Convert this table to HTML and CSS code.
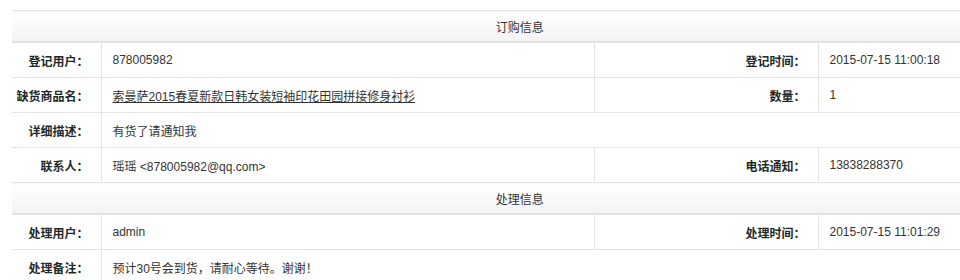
FILE: index.html
```html
<!DOCTYPE html>
<html lang="zh">
<head>
<meta charset="utf-8">
<title>订购信息</title>
<link rel="stylesheet" href="styles.css">
</head>
<body>
<table class="info">
  <colgroup>
    <col class="c1"><col class="c2"><col class="c3"><col class="c4">
  </colgroup>
  <tr class="head"><th colspan="4">订购信息</th></tr>
  <tr>
    <td class="lbl">登记用户：</td><td class="val">878005982</td>
    <td class="lbl">登记时间：</td><td class="val">2015-07-15 11:00:18</td>
  </tr>
  <tr>
    <td class="lbl">缺货商品名：</td><td class="val"><a href="#" class="link">索曼萨2015春夏新款日韩女装短袖印花田园拼接修身衬衫</a></td>
    <td class="lbl">数量：</td><td class="val">1</td>
  </tr>
  <tr>
    <td class="lbl">详细描述：</td><td class="val" colspan="3">有货了请通知我</td>
  </tr>
  <tr>
    <td class="lbl">联系人：</td><td class="val">瑶瑶 &lt;878005982@qq.com&gt;</td>
    <td class="lbl">电话通知：</td><td class="val">13838288370</td>
  </tr>
  <tr class="head"><th colspan="4">处理信息</th></tr>
  <tr>
    <td class="lbl">处理用户：</td><td class="val">admin</td>
    <td class="lbl">处理时间：</td><td class="val">2015-07-15 11:01:29</td>
  </tr>
  <tr>
    <td class="lbl">处理备注：</td><td class="val" colspan="3">预计30号会到货，请耐心等待。谢谢！</td>
  </tr>
</table>
</body>
</html>
```

FILE: styles.css
```css
html, body {
  margin: 0;
  padding: 0;
  background: #fff;
}
body {
  padding: 10px 0 0 12px;
  font-family: Arial, "Liberation Sans", "Noto Sans CJK SC", sans-serif;
  font-size: 12px;
  color: #333;
}
.info {
  border-collapse: collapse;
  width: 1016px;
  table-layout: fixed;
}
.c1 { width: 89px; }
.c2 { width: 493px; }
.c3 { width: 224px; }
.c4 { width: 210px; }
.info th, .info td {
  border: 1px solid #e4e4e4;
  padding: 0;
}
.head th {
  height: 30px;
  font-weight: normal;
  color: #333;
  text-align: center;
  background: linear-gradient(#ffffff, #f3f3f3);
  border-bottom: 2px solid #e2e2e2;
  border-left: 0;
}
.info td {
  height: 34px;
  vertical-align: middle;
}
.info tr td:first-child { border-left: 0; }
.lbl {
  text-align: right;
  font-weight: bold;
  color: #1e2a2a;
  padding-right: 12px !important;
  white-space: nowrap;
}
.val {
  padding-left: 11px !important;
  color: #333;
  white-space: nowrap;
}
.link {
  color: #333;
  text-decoration: underline;
}
```
